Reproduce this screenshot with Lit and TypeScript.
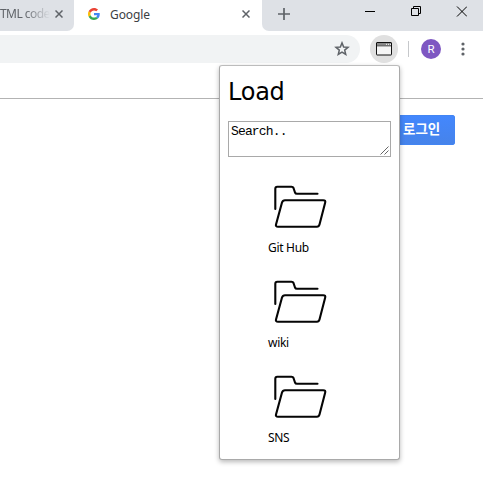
import { LitElement, html, css } from "lit";
import { customElement, property } from "lit/decorators.js";

@customElement("folder-item")
class FolderItem extends LitElement {
  @property() label = "";
  static styles = css`
    :host { display: block; height: 95px; }
    svg { display: block; width: 64px; height: 64px; }
    .label { display: block; height: 20px; line-height: 20px; font-size: 12px; letter-spacing: -.3px; white-space: nowrap; }
  `;
  render() {
    return html`
      <svg viewBox="0 0 64 64" fill="none" stroke="#050505" stroke-width="2.100" stroke-linecap="round" stroke-linejoin="round">
        <path d="M7.300 35V14.800Q7.300 12.700 9.300 12.700H23.500Q25 12.700 25.500 14L27 18.500Q27.500 19.700 29 19.700H49.500" />
        <path d="M17 26.200H55.200Q57.800 26.200 57.200 28.500L51.500 50.500Q50.900 52.700 49 52.700H10Q7.400 52.700 8 50.500L14 28.500Q14.700 26.200 17 26.200Z" />
      </svg>
      <span class="label">${this.label}</span>
    `;
  }
}

const cross = (size: number) => html`
  <svg class="cross" width=${size} height=${size} viewBox="0 0 8 8">
    <path d="M.5 .5L7.500 7.500M7.500 .5L.5 7.500" stroke="#5f6368" stroke-width="1.500" />
  </svg>`;

@customElement("app-root")
class AppRoot extends LitElement {
  static styles = css`
    :host { display: block; position: relative; width: 483px; height: 483px; overflow: hidden; background: #fff;
      font-family: "Noto Sans", "Noto Sans CJK KR", sans-serif; color: #000; }
    * { box-sizing: border-box; }
    svg { display: block; flex: none; }
    .strip { display: flex; height: 31px; background: #fff; }
    .tab { display: flex; align-items: center; height: 31px; padding-bottom: 3px; font-size: 12px; white-space: nowrap; }
    .back { width: 74px; background: #dee1e6; border-bottom-right-radius: 7px; color: #5f6368; }
    .title { width: 55px; line-height: 20px; letter-spacing: -.55px;
      -webkit-mask-image: linear-gradient(90deg, #000 24px, transparent 50px); }
    .active { width: 188px; padding-left: 14px; color: #3c4043; }
    .active .name { width: 132px; margin-left: 10px; letter-spacing: -.1px; }
    .rest { display: flex; flex: 1; background: #dee1e6; border-bottom-left-radius: 7px; padding-left: 16px; }
    .plus { margin-top: 8px; }
    .winctl { margin-left: 75px; }
    .toolbar { display: flex; align-items: center; height: 36px; }
    .address { width: 360px; height: 28px; background: #f1f3f4; border-radius: 0 14px 14px 0; display: flex; align-items: center; justify-content: flex-end; padding-right: 10px; }
    .ext { width: 28px; height: 28px; margin-left: 10px; border-radius: 50%; background: #e0e0e0; display: grid; place-items: center; }
    .sep { width: 1px; height: 16px; margin-left: 10px; background: #c6c8cb; }
    .avatar { width: 20px; height: 20px; margin-left: 12px; border-radius: 50%; background: #7e57c2; color: #fff;
      font: 11.500px/21px Roboto, sans-serif; text-align: center; }
    .dots { margin-left: 20px; }
    .page { height: 416px; padding-top: 31px; }
    .rule { height: 1px; background: #b3b3b3; }
    .login { width: 75px; height: 30px; margin: 16px 0 0 380px; padding-left: 22px; border: 1px solid #4285f4; border-radius: 2px;
      background: linear-gradient(#4387fd, #4683ea); color: #fff; font: bold 13.500px/25px "Noto Sans CJK KR", sans-serif; white-space: nowrap; }
    .popup { position: absolute; left: 219px; top: 65px; width: 181px; height: 395px; padding: 0 8px; background: #fff;
      border: 1px solid #a9a9a9; border-top-color: #bcbcbc; border-radius: 3px; box-shadow: 0 2px 5px rgba(0,0,0,.28); }
    h1 { margin: 9px 0 0; height: 33px; font: 24px/34px "DejaVu Sans", sans-serif; letter-spacing: -.25px; }
    .search { display: flex; justify-content: space-between; align-items: flex-end; width: 163px; height: 36px; margin-top: 13px; border: 1px solid #a9a9a9; }
    .query { align-self: flex-start; padding: 2px 0 0 2px; font: 13px/16px "Liberation Mono", monospace; letter-spacing: -.85px; }
    .folders { padding: 17px 0 0 40px; }
  `;

  render() {
    return html`
      <div class="strip">
        <div class="tab back"><span class="title">TML code</span>${cross(8)}</div>
        <div class="tab active">
          <svg width="12" height="12" viewBox="0 0 48 48">
            <path fill="#EA4335" d="M24 9.500c3.540 0 6.710 1.220 9.210 3.600l6.850-6.850C35.900 2.380 30.470 0 24 0 14.620 0 6.510 5.380 2.560 13.220l7.980 6.190C12.430 13.720 17.740 9.500 24 9.500z" />
            <path fill="#4285F4" d="M46.980 24.550c0-1.570-.15-3.090-.38-4.550H24v9.020h12.940c-.58 2.960-2.260 5.480-4.780 7.180l7.730 6c4.510-4.180 7.090-10.360 7.090-17.650z" />
            <path fill="#FBBC05" d="M10.530 28.590c-.48-1.450-.76-2.990-.76-4.590s.27-3.140.76-4.590l-7.980-6.190C.92 16.460 0 20.120 0 24s.92 7.540 2.560 10.780z" />
            <path fill="#34A853" d="M24 48c6.480 0 11.930-2.130 15.890-5.810l-7.730-6c-2.150 1.450-4.920 2.300-8.160 2.300-6.260 0-11.570-4.220-13.470-9.910l-7.980 6.190C6.510 42.620 14.620 48 24 48z" />
          </svg>
          <span class="name">Google</span>${cross(8)}
        </div>
        <div class="rest">
          <svg class="plus" width="12" height="12" viewBox="0 0 12 12"><path d="M6 0V12M0 6H12" stroke="#5f6368" stroke-width="1.700" /></svg>
          <svg class="winctl" width="102" height="24" viewBox="365 0 102 24" fill="none" stroke="#000">
            <path d="M365 11.500H375M411.500 8.500H418.500V15.500H411.500ZM413.500 8.500V6.500H420.500V13.500H418.500M457 6.500L467 16.500M467 6.500L457 16.500" />
          </svg>
        </div>
      </div>
      <div class="toolbar">
        <div class="address">
          <svg width="16" height="16" viewBox="0 0 16 16" fill="none" stroke="#5f6368" stroke-width="1.500"><path d="M8 1.900L9.650 6L14 6.300L10.700 9.100L11.750 13.500L8 11.150L4.250 13.500L5.300 9.100L2 6.300L6.350 6Z" /></svg>
        </div>
        <div class="ext">
          <svg width="16" height="14" viewBox="0 0 16 14">
            <rect x=".5" y=".5" width="15" height="12.500" rx=".5" fill="#f5f5f5" stroke="#111" />
            <path d="M1 1H15V4H1Z" fill="#888" /><path d="M1 4H15" stroke="#444" stroke-width=".7" />
            <path d="M10 2.300H11M12 2.300H13M14 2.300H15" stroke="#fff" />
          </svg>
        </div>
        <div class="sep"></div>
        <div class="avatar">R</div>
        <svg class="dots" width="4" height="14" viewBox="0 0 4 14" fill="#5f6368"><circle cx="2" cy="2" r="1.600" /><circle cx="2" cy="7" r="1.600" /><circle cx="2" cy="12" r="1.600" /></svg>
      </div>
      <div class="page">
        <div class="rule"></div>
        <div class="login">로그인</div>
      </div>
      <div class="popup">
        <h1>Load</h1>
        <div class="search">
          <span class="query">Search..</span>
          <svg width="11" height="11" viewBox="0 0 11 11" stroke="#555" stroke-width=".9"><path d="M1.500 9.500L9.500 1.500M5.500 9.500L9.500 5.500" /></svg>
        </div>
        <div class="folders">
          ${["Git Hub", "wiki", "SNS"].map((name) => html`<folder-item .label=${name}></folder-item>`)}
        </div>
      </div>
    `;
  }
}
